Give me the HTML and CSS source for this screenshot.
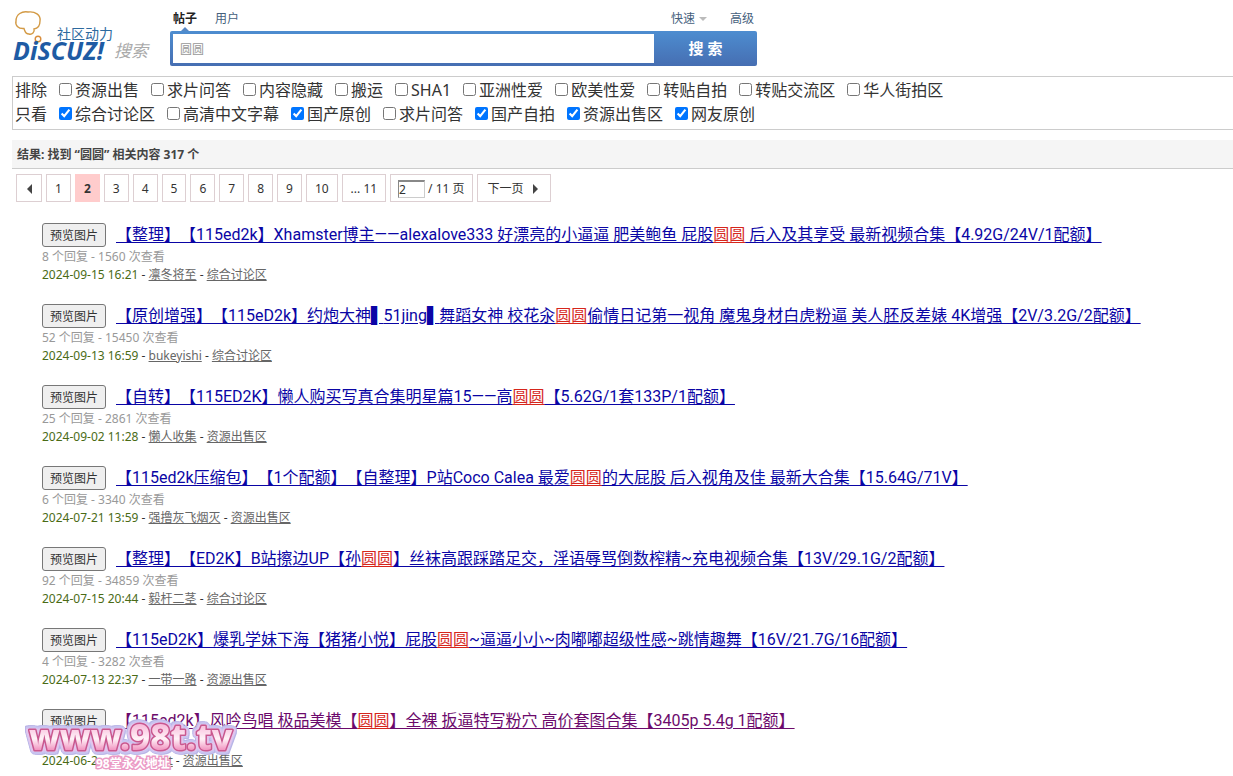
FILE: index.html
```html
<!DOCTYPE html>
<html lang="zh-CN">
<head>
<meta charset="utf-8">
<title>搜索 - Discuz!</title>
<link rel="stylesheet" href="styles.css">
</head>
<body>
<header class="header">
  <a class="logo" href="#" aria-label="Discuz! 搜索">
    <svg width="142" height="54" viewBox="0 0 142 54">
      <path d="M12 18.500C6 19 3 15 4 11C4 4 10 1 16 2C23 1 29 5 28 11C28 16 26 18.500 22 19C23 22 20 25 17 24C13 24 13 21 12 18.500Z" fill="none" stroke="#d39a45" stroke-width="1.400"/>
      <circle cx="26" cy="29" r="2.800" fill="none" stroke="#d98d3c" stroke-width="1.400"/>
      <text class="logo-sub" x="45" y="29">社区动力</text>
      <text class="logo-name" x="1" y="50">DiSCUZ!</text>
      <text class="logo-search" x="102" y="47">搜索</text>
    </svg>
  </a>
  <form class="search">
    <nav class="tabs">
      <a class="tab current" href="#">帖子</a>
      <a class="tab" href="#">用户</a>
      <a class="tab quick" href="#">快速</a>
      <a class="tab" href="#">高级</a>
    </nav>
    <div class="search-box">
      <input class="search-input" type="text" value="圆圆" aria-label="搜索内容">
      <button class="search-button" type="button">搜 索</button>
    </div>
  </form>
</header>
<main class="main">
  <section class="filters">
    <div class="filter-row"><span>排除</span>
      <label><input type="checkbox">资源出售</label>
      <label><input type="checkbox">求片问答</label>
      <label><input type="checkbox">内容隐藏</label>
      <label><input type="checkbox">搬运</label>
      <label><input type="checkbox">SHA1</label>
      <label><input type="checkbox">亚洲性爱</label>
      <label><input type="checkbox">欧美性爱</label>
      <label><input type="checkbox">转贴自拍</label>
      <label><input type="checkbox">转贴交流区</label>
      <label><input type="checkbox">华人街拍区</label>
    </div>
    <div class="filter-row"><span>只看</span>
      <label><input type="checkbox" checked>综合讨论区</label>
      <label><input type="checkbox">高清中文字幕</label>
      <label><input type="checkbox" checked>国产原创</label>
      <label><input type="checkbox">求片问答</label>
      <label><input type="checkbox" checked>国产自拍</label>
      <label><input type="checkbox" checked>资源出售区</label>
      <label><input type="checkbox" checked>网友原创</label>
    </div>
  </section>
  <h2 class="summary">结果: 找到 “<span>圆圆</span>” 相关内容 317 个</h2>
  <nav class="pages" aria-label="分页">
    <a class="page" href="#" aria-label="上一页"><svg width="8" height="10" viewBox="0 0 8 10"><path d="M7 0V10L2 5Z" fill="#444"/></svg></a>
    <a class="page" href="#">1</a>
    <strong class="page on">2</strong>
    <a class="page" href="#">3</a>
    <a class="page" href="#">4</a>
    <a class="page" href="#">5</a>
    <a class="page" href="#">6</a>
    <a class="page" href="#">7</a>
    <a class="page" href="#">8</a>
    <a class="page" href="#">9</a>
    <a class="page" href="#">10</a>
    <a class="page" href="#">... 11</a>
    <label class="page"><input class="page-input" type="text" value="2" aria-label="页码">/ 11 页</label>
    <a class="page next" href="#">下一页<svg width="8" height="10" viewBox="0 0 8 10"><path d="M1 0V10L6 5Z" fill="#444"/></svg></a>
  </nav>
  <ul class="results">
    <li class="result">
      <h3 class="title"><button class="preview" type="button">预览图片</button><a href="#">【整理】【115ed2k】Xhamster博主——alexalove333 好漂亮的小逼逼 肥美鲍鱼 屁股<em>圆圆</em> 后入及其享受 最新视频合集【4.92G/24V/1配额】</a></h3>
      <p class="count">8 个回复 - 1560 次查看</p>
      <p class="meta"><span class="date">2024-09-15 16:21</span> - <a href="#">凛冬将至</a> - <a href="#">综合讨论区</a></p>
    </li>
    <li class="result">
      <h3 class="title"><button class="preview" type="button">预览图片</button><a href="#">【原创增强】【115eD2k】约炮大神<span class="block">▌</span>51jing<span class="block">▌</span>舞蹈女神 校花汆<em>圆圆</em>偷情日记第一视角 魔鬼身材白虎粉逼 美人胚反差婊 4K增强【2V/3.2G/2配额】</a></h3>
      <p class="count">52 个回复 - 15450 次查看</p>
      <p class="meta"><span class="date">2024-09-13 16:59</span> - <a href="#">bukeyishi</a> - <a href="#">综合讨论区</a></p>
    </li>
    <li class="result">
      <h3 class="title"><button class="preview" type="button">预览图片</button><a href="#">【自转】【115ED2K】懒人购买写真合集明星篇15——高<em>圆圆</em>【5.62G/1套133P/1配额】</a></h3>
      <p class="count">25 个回复 - 2861 次查看</p>
      <p class="meta"><span class="date">2024-09-02 11:28</span> - <a href="#">懒人收集</a> - <a href="#">资源出售区</a></p>
    </li>
    <li class="result">
      <h3 class="title"><button class="preview" type="button">预览图片</button><a href="#">【115ed2k压缩包】【1个配额】【自整理】P站Coco Calea 最爱<em>圆圆</em>的大屁股 后入视角及佳 最新大合集【15.64G/71V】</a></h3>
      <p class="count">6 个回复 - 3340 次查看</p>
      <p class="meta"><span class="date">2024-07-21 13:59</span> - <a href="#">强撸灰飞烟灭</a> - <a href="#">资源出售区</a></p>
    </li>
    <li class="result">
      <h3 class="title"><button class="preview" type="button">预览图片</button><a href="#">【整理】【ED2K】B站擦边UP【孙<em>圆圆</em>】丝袜高跟踩踏足交，淫语辱骂倒数榨精~充电视频合集【13V/29.1G/2配额】</a></h3>
      <p class="count">92 个回复 - 34859 次查看</p>
      <p class="meta"><span class="date">2024-07-15 20:44</span> - <a href="#">毅杆二茎</a> - <a href="#">综合讨论区</a></p>
    </li>
    <li class="result">
      <h3 class="title"><button class="preview" type="button">预览图片</button><a href="#">【115eD2K】爆乳学妹下海【猪猪小悦】屁股<em>圆圆</em>~逼逼小小~肉嘟嘟超级性感~跳情趣舞【16V/21.7G/16配额】</a></h3>
      <p class="count">4 个回复 - 3282 次查看</p>
      <p class="meta"><span class="date">2024-07-13 22:37</span> - <a href="#">一带一路</a> - <a href="#">资源出售区</a></p>
    </li>
    <li class="result">
      <h3 class="title"><button class="preview" type="button">预览图片</button><a class="visited" href="#">【115ed2k】风吟鸟唱 极品美模【<em>圆圆</em>】全裸 扳逼特写粉穴 高价套图合集【3405p 5.4g 1配额】</a></h3>
      <p class="count"></p>
      <p class="meta"><span class="date covered">2024-06-2</span><a href="#">nt</a> - <a href="#">资源出售区</a></p>
      <svg class="watermark" width="220" height="62" viewBox="0 0 220 62" role="img" aria-label="www.98t.tv">
        <defs>
          <linearGradient id="pink" x1="0" y1="0" x2="0" y2="1">
            <stop offset="0.2" stop-color="#f7b3d6"/>
            <stop offset="0.55" stop-color="#fff3f8"/>
            <stop offset="0.8" stop-color="#f08fbd"/>
          </linearGradient>
        </defs>
        <text class="mark" x="6" y="37" fill="url(#pink)">www.98t.tv</text>
        <text class="mark-sub" x="73" y="55">98堂永久地址</text>
      </svg>
    </li>
  </ul>
</main>
</body>
</html>
```

FILE: styles.css
```css
* { box-sizing: border-box; }

body {
  margin: 0;
  padding-left: 12px;
  background: #fff;
  color: #333;
  font: 12px/18px "Noto Sans", "Noto Sans CJK SC", sans-serif;
  text-spacing-trim: space-all;
  overflow-x: hidden;
}

h2, h3, p, ul { margin: 0; padding: 0; }
input, button { font-family: inherit; }

.header {
  display: flex;
  gap: 16px;
  padding: 10px 0;
}
.logo { display: block; height: 54px; }
.logo svg { display: block; overflow: visible; }
.logo-sub { font-size: 14px; fill: #2d6a9f; }
.logo-name { font-size: 25px; font-weight: 700; font-style: italic; fill: #1e5ba4; }
.logo-search { font-size: 17px; font-style: italic; fill: #aaa; }

.search { flex: 0 1 587px; }
.tabs {
  display: flex;
  gap: 18px;
  height: 21px;
  padding: 0 3px;
  line-height: 18px;
}
.tab { color: #45607c; text-decoration: none; }
.tab.current { position: relative; color: #222; font-weight: 700; }
.tab.current::after {
  content: "";
  position: absolute;
  left: 8px;
  bottom: 0;
  border: 4px solid transparent;
  border-top: 0;
  border-bottom-color: #5687c3;
}
.quick {
  display: flex;
  align-items: center;
  gap: 4px;
  height: 18px;
  margin-left: auto;
}
.quick::after {
  content: "";
  border: 4px solid transparent;
  border-top-color: #bbb;
  border-bottom: 0;
}
.quick + .tab { margin-left: 5px; }
.search-box {
  display: flex;
  height: 35px;
  padding: 3px 0 3px 3px;
  border-radius: 2px;
  background: linear-gradient(#4d8dd0, #466eb2);
}
.search-input {
  flex: 1;
  min-width: 0;
  padding: 0 7px;
  border: 0;
  border-radius: 0;
  background: #fff;
  color: #999;
  font-size: 12px;
}
.search-button {
  width: 103px;
  padding: 0 6px 2px;
  border: 0;
  background: none;
  color: #fff;
  font-size: 15px;
  font-weight: 700;
}

.filters {
  padding: 1px 2px 3px;
  border: 1px solid #ccc;
  border-right: 0;
}
.filter-row {
  display: flex;
  gap: 12px;
  font-size: 16px;
  line-height: 24px;
  white-space: nowrap;
}
.filter-row label { display: flex; gap: 3px; }
.filter-row input { width: 13px; height: 13px; margin: 5px 0 0; }

.summary {
  margin-top: 10px;
  padding: 6px 5px 4px;
  border-bottom: 1px solid #ccc;
  background: #f5f5f5;
  color: #444;
  font-size: 12px;
  line-height: 18px;
}

.pages { display: flex; gap: 4px; margin: 5px 0 0 4px; }
.page {
  display: flex;
  align-items: center;
  height: 28px;
  padding: 1px 8px 0;
  border: 1px solid #ddcfd2;
  color: #333;
  text-decoration: none;
  white-space: nowrap;
}
.page.on { border-color: #ffcccc; background: #ffcccc; }
.page.next { gap: 8px; padding: 1px 10px 0; }
.page-input {
  width: 27px;
  height: 18px;
  margin-right: 3px;
  padding: 0;
  border: 1px solid #ccc;
  border-top: 2px solid #888;
  border-left-color: #888;
  border-radius: 0;
  color: #333;
  font-size: 12px;
}
label.page { padding: 1px 7px 0; }

.results { margin-top: 21px; padding-left: 30px; list-style: none; }
.result { position: relative; margin-bottom: 20px; }
.result:last-child { margin-bottom: 0; }
.title {
  display: flex;
  gap: 10px;
  height: 25px;
  font-family: Roboto, "Noto Sans CJK SC", sans-serif;
  font-size: 16px;
  font-weight: 400;
  line-height: 24px;
  white-space: nowrap;
}
.title a { color: #0a05a5; text-underline-offset: 2px; }
.title a.visited { color: #6c0a6c; }
.title em { color: #d6261c; font-style: normal; text-decoration: underline; }
.block { font-family: "DejaVu Sans", sans-serif; }
.preview {
  flex: none;
  width: 64px;
  height: 24px;
  padding: 0 0 2px;
  border: 1px solid #777;
  border-radius: 3px;
  background: #efefef;
  color: #333;
  font-size: 12px;
}
.count { min-height: 18px; color: #999; }
.meta { color: #333; }
.meta a { color: #666; }
.date { color: #4a6b16; }
.covered { display: inline-block; width: 119px; }

.watermark { position: absolute; left: -19px; top: 4px; overflow: visible; }
.mark {
  font-size: 35px;
  font-weight: 800;
  stroke: #c9588f;
  stroke-width: 3px;
  stroke-linejoin: round;
  paint-order: stroke;
  filter:
    drop-shadow(2px 0 0 #e3c5ec) drop-shadow(-2px 0 0 #e3c5ec)
    drop-shadow(0 2px 0 #c9c4f0) drop-shadow(0 -2px 0 #c9c4f0)
    drop-shadow(1px 1px 0 #b9b5e6) drop-shadow(-1px -1px 0 #b9b5e6);
}
.mark-sub {
  fill: #fff;
  stroke: #eb9bc6;
  stroke-width: 3px;
  paint-order: stroke;
  font-size: 12px;
  font-weight: 700;
}
```
